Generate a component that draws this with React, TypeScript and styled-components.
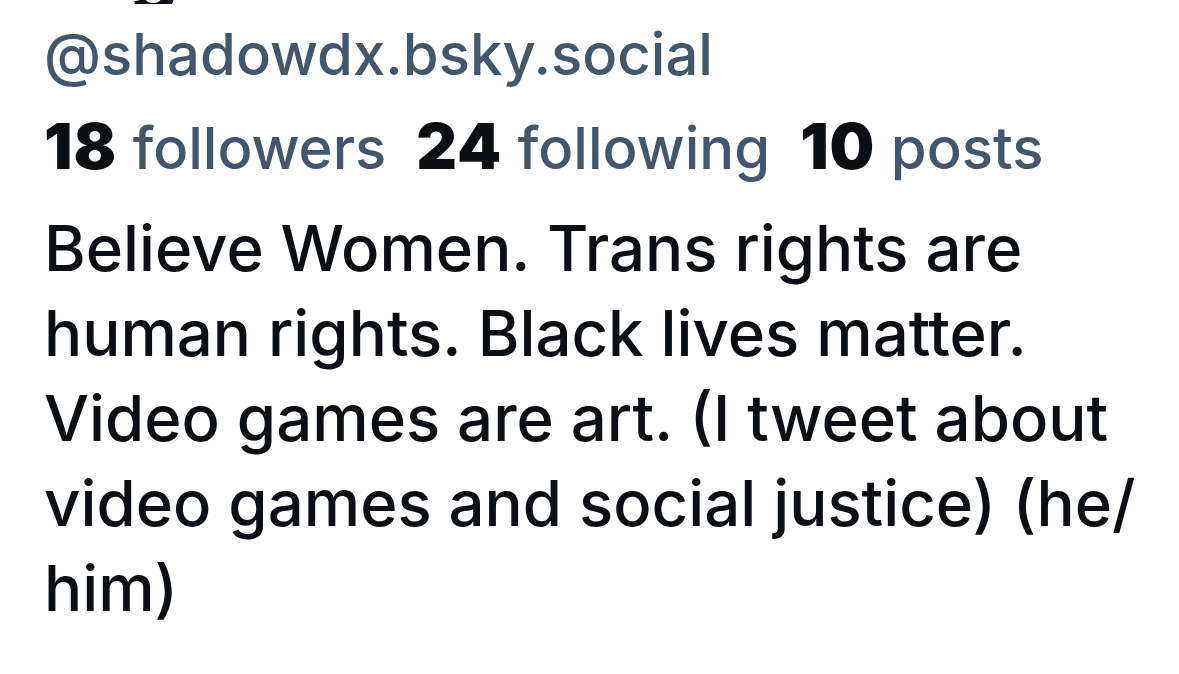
import styled, { createGlobalStyle } from "styled-components";

const GlobalStyle = createGlobalStyle`
  html, body {
    margin: 0;
    padding: 0;
    background: #ffffff;
  }
  body {
    font-family: Inter, "Noto Sans", sans-serif;
    -webkit-font-smoothing: antialiased;
  }
`

const Page = styled.main`
  width: 1179px;
  height: 674px;
  overflow: hidden;
  padding-left: 44px;
  box-sizing: border-box;
`

const NameClip = styled.div`
  height: 4px;
  overflow: hidden;
  padding-left: 14px;
`

const DisplayName = styled.h1`
  margin: 0;
  margin-top: -80px;
  font-size: 76px;
  line-height: 96px;
  font-weight: 800;
  color: #0b0f14;
  white-space: nowrap;
`

const Handle = styled.div`
  margin-top: 10px;
  font-size: 58px;
  line-height: 80px;
  font-weight: 500;
  color: #42576c;
`

const Stats = styled.div`
  display: flex;
  gap: 30px;
  margin-top: 12px;
  font-size: 58px;
  line-height: 80px;
`

const Stat = styled.span`
  color: #42576c;
  font-weight: 500;
  white-space: nowrap;
`

const Count = styled.b`
  color: #0b0f14;
  font-weight: 900;
  font-size: 63px;
  letter-spacing: 1px;
`

const Bio = styled.p`
  margin: 17px 0 0;
  width: 1125px;
  font-size: 63.5px;
  line-height: 85px;
  font-weight: 500;
  color: #0b0f14;
`

export default function App() {
  return (
    <Page>
      <GlobalStyle />
      <NameClip>
        <DisplayName>Big D</DisplayName>
      </NameClip>
      <Handle>@shadowdx.bsky.social</Handle>
      <Stats>
        <Stat><Count>18</Count> followers</Stat>
        <Stat><Count>24</Count> following</Stat>
        <Stat><Count>10</Count> posts</Stat>
      </Stats>
      <Bio>
        Believe Women. Trans rights are human rights. Black lives matter.
        Video games are art. (I tweet about video games and social justice) (he/ him)
      </Bio>
    </Page>
  );
}
